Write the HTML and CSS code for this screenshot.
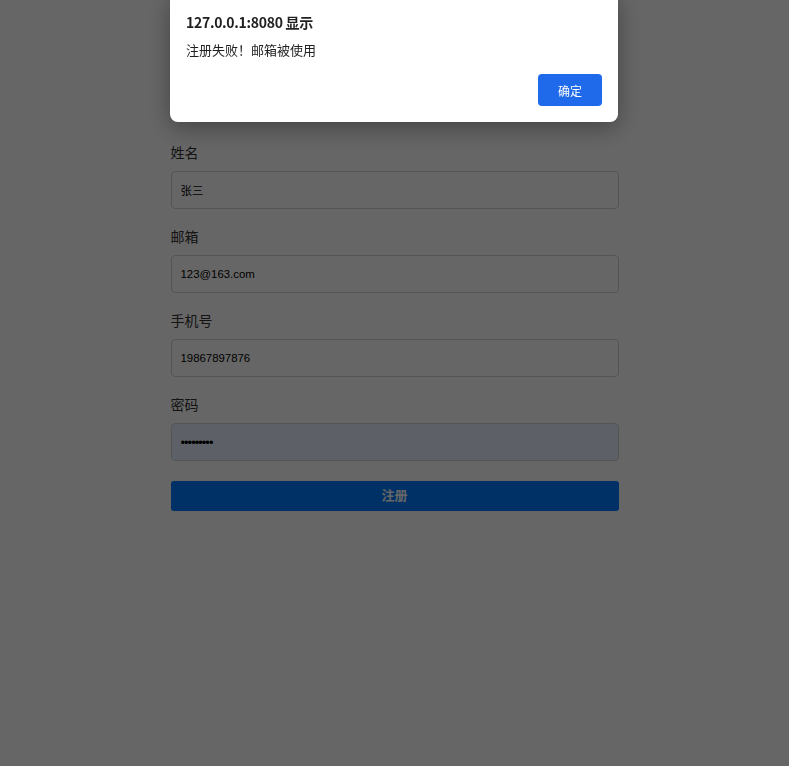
FILE: index.html
```html
<!DOCTYPE html>
<html lang="zh-CN">
<head>
<meta charset="utf-8">
<title>用户注册</title>
<link rel="stylesheet" href="styles.css">
</head>
<body>
<main class="page">
  <form class="form">
    <div class="group">
      <label class="label">姓名</label>
      <input class="input" type="text" value="张三">
    </div>
    <div class="group">
      <label class="label">邮箱</label>
      <input class="input" type="text" value="123@163.com">
    </div>
    <div class="group">
      <label class="label">手机号</label>
      <input class="input" type="text" value="19867897876">
    </div>
    <div class="group">
      <label class="label">密码</label>
      <input class="input input-autofill" type="password" value="123456789">
    </div>
    <button class="submit" type="button">注册</button>
  </form>
</main>
<div class="overlay"></div>
<div class="dialog">
  <div class="dialog-title">127.0.0.1:8080 显示</div>
  <div class="dialog-msg">注册失败！邮箱被使用</div>
  <div class="dialog-actions">
    <button class="dialog-btn" type="button">确定</button>
  </div>
</div>
</body>
</html>
```

FILE: styles.css
```css
html, body {
  margin: 0;
  padding: 0;
  background: #ffffff;
}
body {
  font-family: "Noto Sans CJK SC", "Noto Sans", sans-serif;
  width: 789px;
  height: 766px;
  overflow: hidden;
}
.page {
  padding-top: 143px;
}
.form {
  width: 448px;
  margin: 0 auto;
  display: flex;
  flex-direction: column;
}
.group {
  display: flex;
  flex-direction: column;
  margin-bottom: 18px;
}
.label {
  font-size: 14px;
  line-height: 20px;
  color: #333333;
  margin-bottom: 8px;
  transform: translateY(-1px);
}
.input {
  box-sizing: border-box;
  width: 448px;
  height: 38px;
  border: 1px solid #ced4da;
  border-radius: 4px;
  padding: 0 9px;
  font-family: "Liberation Sans", "Noto Sans CJK SC", sans-serif;
  font-size: 11.4px;
  color: #000000;
  background: #ffffff;
  outline: none;
}
.input-autofill {
  background: #e8f0fe;
  font-size: 13px;
  letter-spacing: -1px;
}
.submit {
  margin-top: 2px;
  height: 30px;
  padding: 0 0 3px 0;
  border: none;
  border-radius: 3px;
  background: #007bff;
  color: #ffffff;
  font-family: "Noto Sans CJK SC", sans-serif;
  font-size: 13px;
  font-weight: 700;
}
.overlay {
  position: fixed;
  inset: 0;
  background: rgba(0, 0, 0, 0.6);
}
.dialog {
  position: fixed;
  top: -8px;
  left: 170px;
  width: 448px;
  box-sizing: border-box;
  padding: 20px 16px 16px 16px;
  background: #ffffff;
  border-radius: 8px;
  box-shadow: 0 6px 24px rgba(0, 0, 0, 0.35);
  display: flex;
  flex-direction: column;
}
.dialog-title {
  font-size: 14px;
  line-height: 20px;
  font-weight: 700;
  color: #1f1f1f;
  letter-spacing: -0.3px;
}
.dialog-msg {
  margin-top: 8px;
  font-size: 13px;
  line-height: 20px;
  color: #1f1f1f;
}
.dialog-actions {
  margin-top: 14px;
  display: flex;
  justify-content: flex-end;
}
.dialog-btn {
  width: 64px;
  height: 32px;
  border: none;
  border-radius: 4px;
  background: #1f6aea;
  color: #ffffff;
  font-family: "Noto Sans CJK SC", sans-serif;
  font-size: 12px;
}
```
